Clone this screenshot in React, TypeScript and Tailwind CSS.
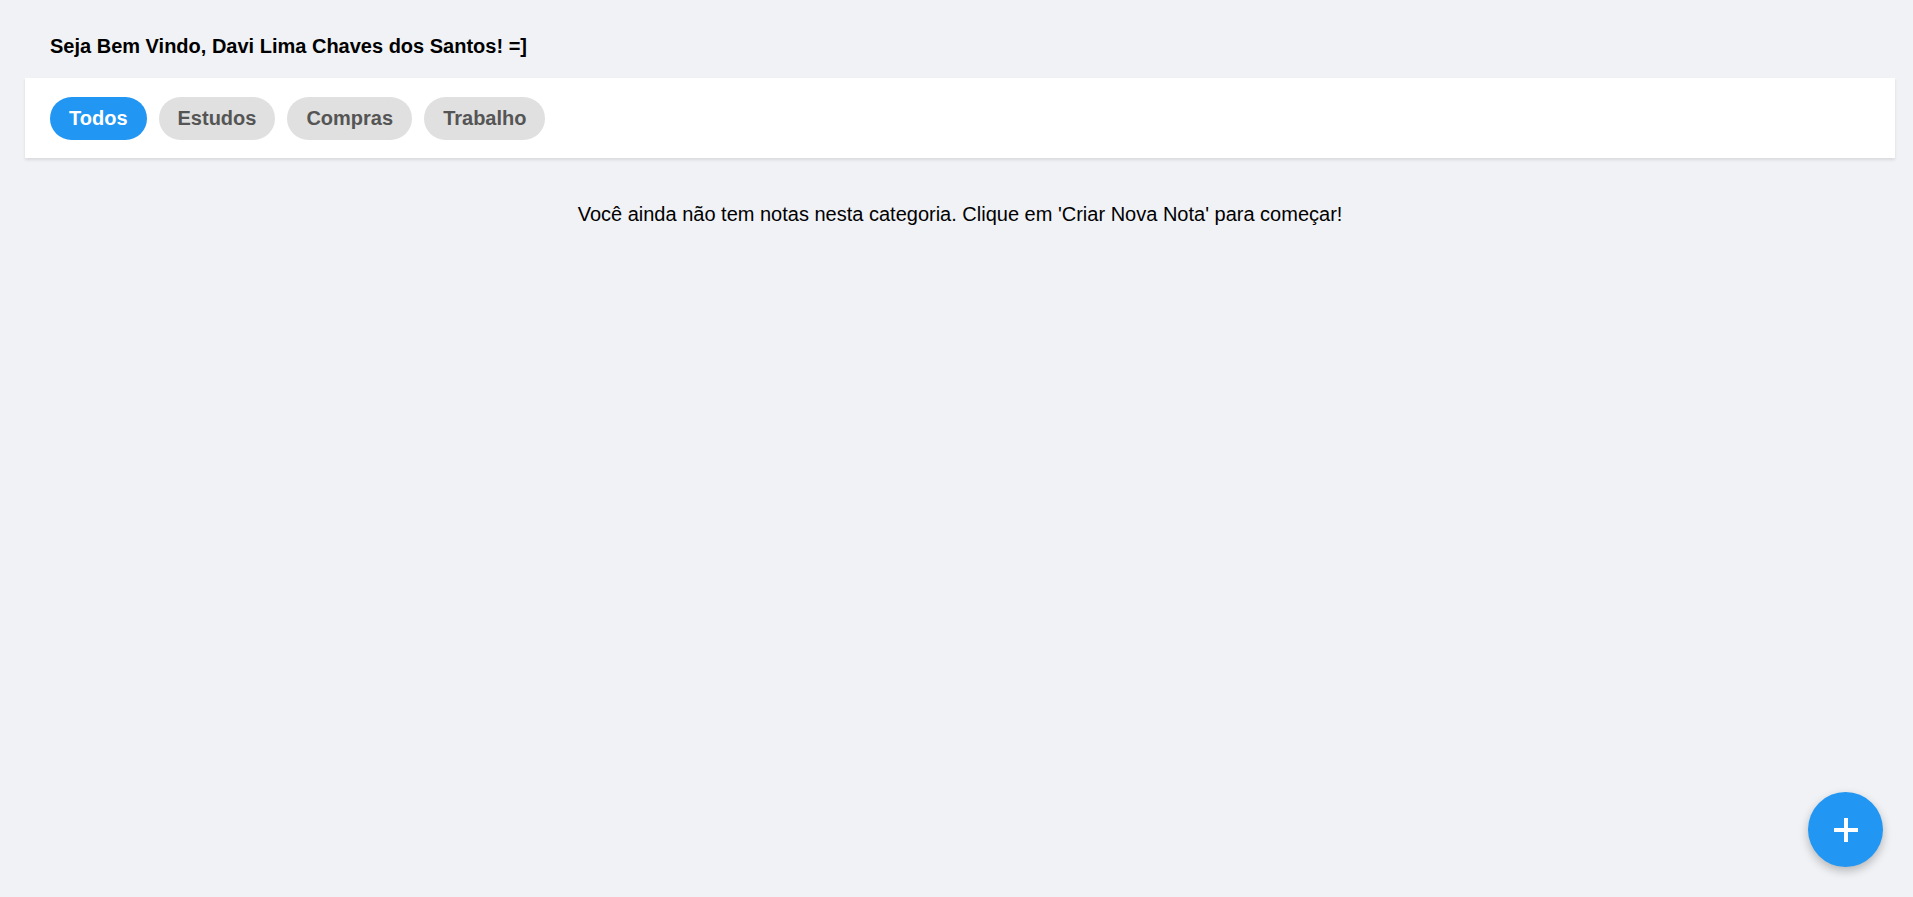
import React, { useState } from 'react';

const categorias = ['Todos', 'Estudos', 'Compras', 'Trabalho'];

export default function App() {
  const [ativa, setAtiva] = useState('Todos');

  return (
    <div className="min-h-screen bg-[#f0f2f5] pl-[25px] pr-[18px] pt-[35px] font-['Liberation_Sans',Arial,sans-serif] text-black">
      <h1 className="ml-[25px] text-[20px] font-bold leading-[23px]">
        Seja Bem Vindo, Davi Lima Chaves dos Santos! =]
      </h1>

      <div className="mt-[20px] flex h-[80px] items-center gap-[12px] bg-white px-[25px] shadow-[0_2px_3px_rgba(0,0,0,0.1)]">
        {categorias.map((cat) => (
          <button
            key={cat}
            onClick={() => setAtiva(cat)}
            className={`h-[43px] rounded-full px-[19px] text-[20px] font-bold ${
              ativa === cat ? 'bg-[#2196f3] text-white' : 'bg-[#e0e0e0] text-[#555]'
            }`}
          >
            {cat}
          </button>
        ))}
      </div>

      <p className="mt-[45px] text-center text-[20px] leading-[23px]">
        Você ainda não tem notas nesta categoria. Clique em 'Criar Nova Nota' para começar!
      </p>

      <button className="fixed bottom-[30px] right-[30px] flex h-[75px] w-[75px] items-center justify-center rounded-full bg-[#2196f3] shadow-[0_4px_10px_rgba(0,0,0,0.25)]">
        <svg width="24" height="24" viewBox="0 0 24 24">
          <rect x="10" y="0" width="4" height="24" fill="white" />
          <rect x="0" y="10" width="24" height="4" fill="white" />
        </svg>
      </button>
    </div>
  );
}
